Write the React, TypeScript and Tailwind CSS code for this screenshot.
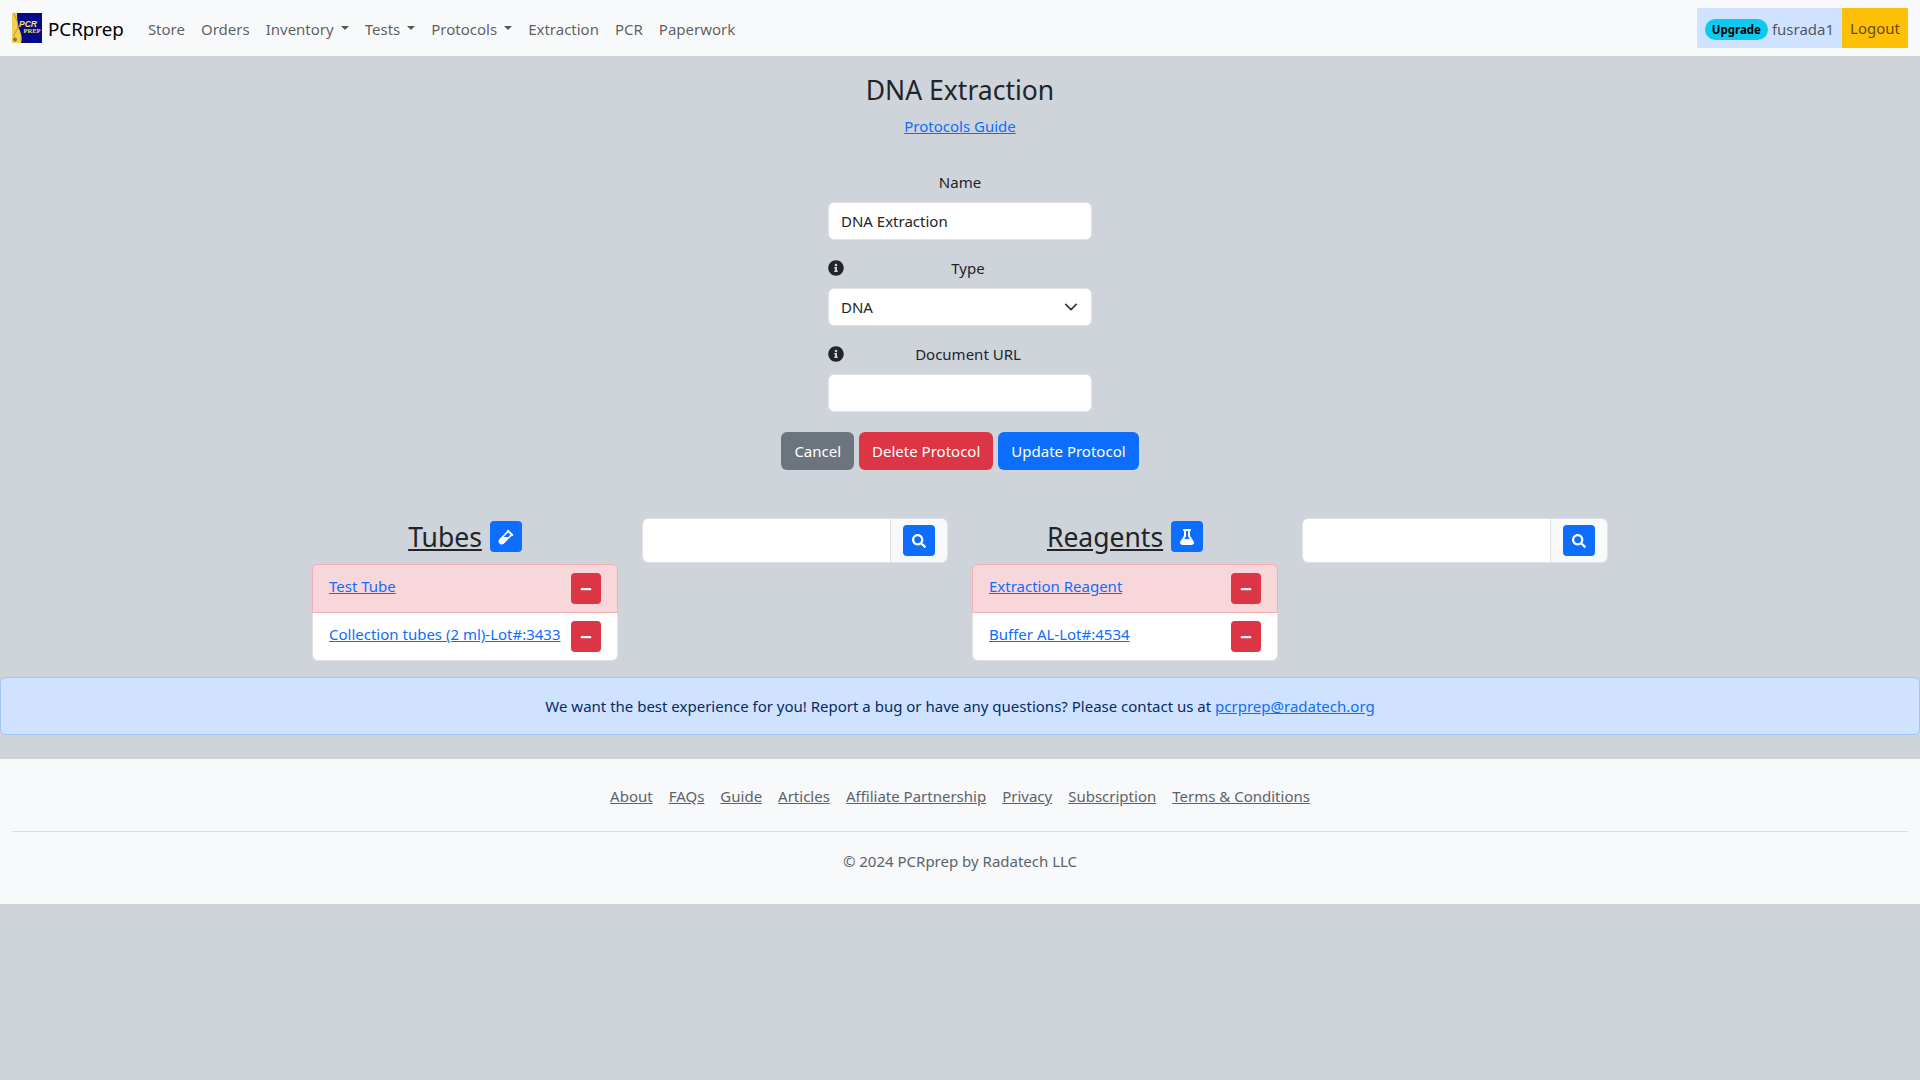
import React from 'react';
import { FaInfoCircle, FaVial, FaFlask, FaSearch, FaMinus } from 'react-icons/fa';

const Logo = () => (
  <svg width="30" height="30" viewBox="0 0 30 30" className="shrink-0">
    <rect width="30" height="30" fill="#050a8a" />
    <path d="M0 0H5C5 8 6 14 8 18C10 23 10 27 9 30H0Z" fill="#f2cf4e" />
    <path d="M2 0C3 5 6 8 6 13C6 17 2 19 2 24" fill="none" stroke="#b89a35" strokeWidth="1" />
    <circle cx="3" cy="26.5" r="2" fill="#8a7a30" />
    <text x="7" y="13.5" fill="#f6e05a" fontSize="8.5" fontWeight="700" fontStyle="italic" fontFamily="Liberation Sans, sans-serif">PCR</text>
    <text x="11.5" y="20" fill="#f6e05a" fontSize="6.5" fontWeight="700" fontFamily="Liberation Serif, serif">PREP</text>
  </svg>
);

const navLinks = [
  { label: 'Store' },
  { label: 'Orders' },
  { label: 'Inventory', caret: true },
  { label: 'Tests', caret: true },
  { label: 'Protocols', caret: true },
  { label: 'Extraction' },
  { label: 'PCR' },
  { label: 'Paperwork' },
];

const footerLinks = ['About', 'FAQs', 'Guide', 'Articles', 'Affiliate Partnership', 'Privacy', 'Subscription', 'Terms & Conditions'];

const Navbar = () => (
  <nav className="h-14 bg-[#f8f9fa] flex items-center pl-3 pr-3 justify-between">
    <div className="flex items-center">
      <a className="flex items-center gap-[6px] text-[18.75px] text-black mr-[16px]">
        <Logo />
        <span className="pt-[1px]">PCRprep</span>
      </a>
      {navLinks.map((l) => (
        <a key={l.label} className="px-2 pt-[2px] text-[#000000a6] flex items-center">
          {l.label}
          {l.caret && <span className="ml-[7px] w-0 h-0 border-x-[4.5px] border-x-transparent border-t-[4.5px] border-t-[#000000a6] -translate-y-[1px]" />}
        </a>
      ))}
    </div>
    <div className="flex items-center h-10">
      <div className="h-10 bg-[#cfe2ff] flex items-center pl-2 pr-2 gap-1 text-[#000000a6]">
        <span className="h-[21px] mt-[3px] px-[7px] rounded-full bg-[#0dcaf0] text-black text-[11.5px] font-bold flex items-center">Upgrade</span>
        <span className="pt-[1px]">fusrada1</span>
      </div>
      <div className="h-10 bg-[#ffc107] text-[#664d03] flex items-center px-2">Logout</div>
    </div>
  </nav>
);

const ProtocolForm = () => (
  <div className="flex flex-col items-center">
    <h3 className="text-[26.5px] leading-[34px] mt-[17px] text-[#212529]">DNA Extraction</h3>
    <a className="text-[#0d6efd] underline mt-[7px] mb-[32px]">Protocols Guide</a>
    <div className="w-[264px] flex flex-col">
      <label className="text-center h-6 mb-2">Name</label>
      <input readOnly value="DNA Extraction" className="h-[38px] rounded-md bg-white border border-[#dee2e6] px-3 mb-4 outline-none" />
      <div className="flex items-center h-6 mb-2">
        <FaInfoCircle className="text-[#212529] w-4 h-4" />
        <label className="flex-1 text-center">Type</label>
      </div>
      <div className="h-[38px] rounded-md bg-white border border-[#dee2e6] pl-3 pr-[13px] mb-4 flex items-center justify-between">
        DNA
        <svg width="14" height="14" viewBox="0 0 16 16" fill="none" stroke="#343a40" strokeWidth="2" strokeLinecap="round" strokeLinejoin="round">
          <path d="m2 5 6 6 6-6" />
        </svg>
      </div>
      <div className="flex items-center h-6 mb-2">
        <FaInfoCircle className="text-[#212529] w-4 h-4" />
        <label className="flex-1 text-center">Document URL</label>
      </div>
      <input className="h-[38px] rounded-md bg-white border border-[#dee2e6] px-3 outline-none" />
    </div>
    <div className="flex gap-[5px] mt-5 text-white">
      <button className="h-[38px] px-[13px] rounded-md bg-[#6c757d]">Cancel</button>
      <button className="h-[38px] px-[13px] rounded-md bg-[#dc3545]">Delete Protocol</button>
      <button className="h-[38px] px-[13px] rounded-md bg-[#0d6efd]">Update Protocol</button>
    </div>
  </div>
);

const ItemRow: React.FC<{ label: string; danger?: boolean }> = ({ label, danger }) => (
  <li className={`flex items-start justify-between px-4 pt-2 ${danger ? 'bg-[#f8d7da] border border-[#f1aeb5] rounded-t-md -mx-px -mt-px h-[49px]' : 'h-[47px]'}`}>
    <a className="text-[#0d6efd] underline mt-[1px] whitespace-nowrap">{label}</a>
    <button className="w-[30px] h-[31px] rounded bg-[#dc3545] text-white flex items-center justify-center shrink-0">
      <FaMinus className="w-3 h-3" />
    </button>
  </li>
);

const ItemSection: React.FC<{ title: string; icon: React.ReactNode; items: string[] }> = ({ title, icon, items }) => (
  <section className="w-[660px] pl-3 flex gap-[24px]">
    <div className="w-[306px]">
      <div className="h-[46px] pt-[3px] flex items-start justify-center gap-2">
        <h2 className="text-[26.5px] leading-[34px] -mt-px underline text-[#212529]">{title}</h2>
        <button className="w-8 h-[31px] rounded bg-[#0d6efd] text-white flex items-center justify-center">{icon}</button>
      </div>
      <ul className="bg-white border border-[#dee2e6] rounded-md">
        {items.map((it, i) => (
          <ItemRow key={it} label={it} danger={i === 0} />
        ))}
      </ul>
    </div>
    <div className="w-[306px] h-[45px] flex rounded-md border border-[#dee2e6] overflow-hidden">
      <input className="flex-1 min-w-0 bg-white outline-none" />
      <div className="w-[57px] bg-[#f8f9fa] border-l border-[#dee2e6] flex items-center justify-center">
        <button className="w-8 h-[31px] rounded bg-[#0d6efd] text-white flex items-center justify-center">
          <FaSearch className="w-[14px] h-[14px]" />
        </button>
      </div>
    </div>
  </section>
);

const Footer = () => (
  <footer className="mt-6 h-[145px] bg-[#f8f9fa] px-3 pt-[25px]">
    <div className="flex justify-center gap-4 h-6 text-[#5c636a]">
      {footerLinks.map((f) => (
        <a key={f} className="underline">{f}</a>
      ))}
    </div>
    <hr className="mt-[23px] border-[#dcdfe2]" />
    <p className="text-center text-[#5c636a] mt-[17px]">© 2024 PCRprep by Radatech LLC</p>
  </footer>
);

export default function App() {
  return (
    <div className="min-h-[1080px] bg-[#ced4da] text-[15px] leading-6 text-[#212529] font-['Noto_Sans',sans-serif]">
      <Navbar />
      <ProtocolForm />
      <div className="w-[1320px] mx-auto flex mt-[48px]">
        <ItemSection title="Tubes" icon={<FaVial className="w-4 h-4" />} items={['Test Tube', 'Collection tubes (2 ml)-Lot#:3433']} />
        <ItemSection title="Reagents" icon={<FaFlask className="w-4 h-4" />} items={['Extraction Reagent', 'Buffer AL-Lot#:4534']} />
      </div>
      <div className="mt-[16px] h-[58px] bg-[#cfe2ff] border border-[#9ec5fe] rounded-md flex items-center justify-center text-[#052c65]">
        <span>We want the best experience for you! Report a bug or have any questions? Please contact us at <a className="text-[#0d6efd] underline">pcrprep@radatech.org</a></span>
      </div>
      <Footer />
    </div>
  );
}
